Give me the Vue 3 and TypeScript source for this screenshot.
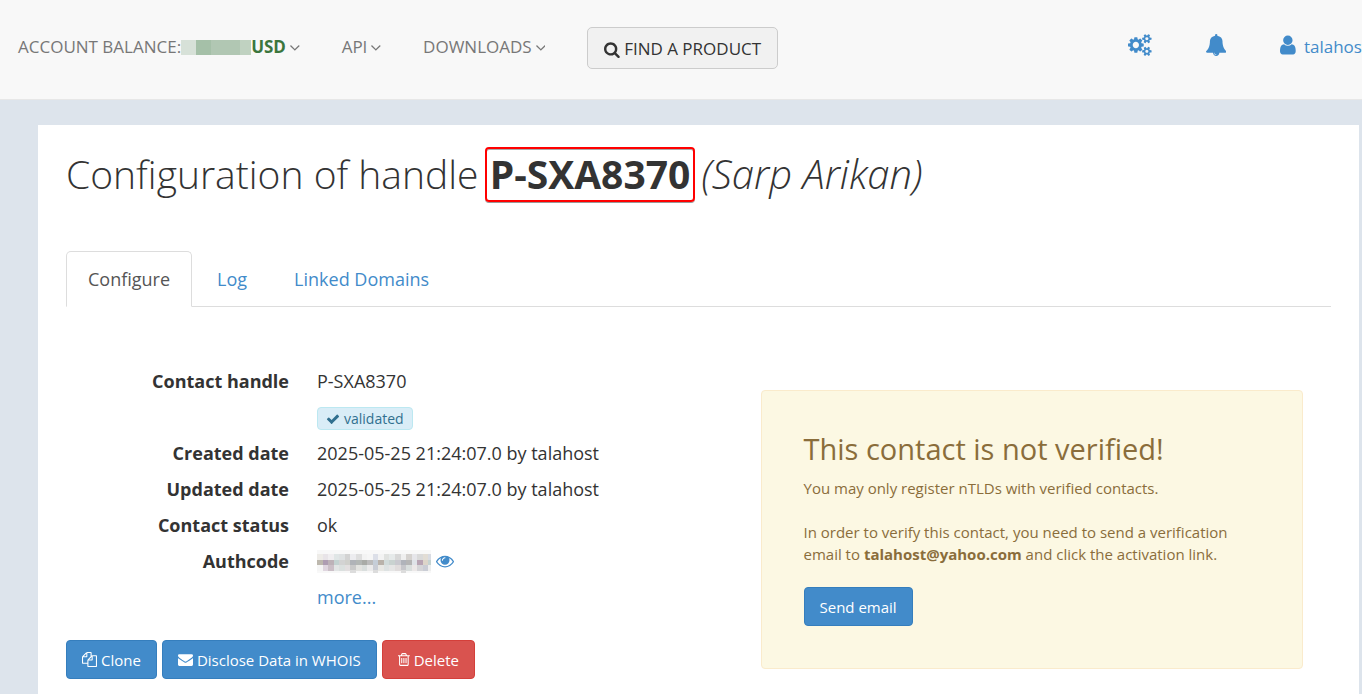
<script setup lang="ts">
import { ref } from 'vue'

interface Glyph {
  box: string
  d: string
}

interface Row {
  label: string
  value: string
}

const icons: Record<string, Glyph> = {
  search: {
    box: '64 0 1664 1792',
    d: 'M1216 832q0-185-131.5-316.5t-316.5-131.5-316.5 131.5-131.5 316.5 131.5 316.5 316.5 131.5 316.5-131.5 131.5-316.5zm512 832q0 52-38 90t-90 38q-54 0-90-38l-343-342q-179 124-399 124-143 0-273.5-55.5t-225-150-150-225-55.5-273.5 55.5-273.5 150-225 225-150 273.5-55.5 273.5 55.5 225 150 150 225 55.5 273.5q0 220-124 399l343 343q37 37 37 90z',
  },
  angle: {
    box: '384 0 1024 1792',
    d: 'M1395 736q0 13-10 23l-466 466q-10 10-23 10t-23-10l-466-466q-10-10-10-23t10-23l50-50q10-10 23-10t23 10l393 393 393-393q10-10 23-10t23 10l50 50q10 10 10 23z',
  },
  cogs: {
    box: '0 0 1920 1792',
    d: 'M896 896q0-106-75-181t-181-75-181 75-75 181 75 181 181 75 181-75 75-181zm768 512q0-52-38-90t-90-38-90 38-38 90q0 53 37.5 90.5t90.5 37.5 90.5-37.5 37.5-90.5zm0-1024q0-52-38-90t-90-38-90 38-38 90q0 53 37.5 90.5t90.5 37.5 90.5-37.5 37.5-90.5zm-384 421v185q0 10-7 19.5t-16 10.5l-155 24q-11 35-32 76 34 48 90 115 7 11 7 20 0 12-7 19-23 30-82.5 89.5t-78.5 59.5q-11 0-21-7l-115-90q-37 19-77 31-11 108-23 155-7 24-30 24h-186q-11 0-20-7.5t-10-17.5l-23-153q-34-10-75-31l-118 89q-7 7-20 7-11 0-21-8-144-133-144-160 0-9 7-19 10-14 41-53t47-61q-23-44-35-82l-152-24q-10-1-17-9.5t-7-19.5v-185q0-10 7-19.5t16-10.5l155-24q11-35 32-76-34-48-90-115-7-11-7-20 0-12 7-20 22-30 82-89t79-59q11 0 21 7l115 90q34-18 77-32 11-108 23-154 7-24 30-24h186q11 0 20 7.5t10 17.5l23 153q34 10 75 31l118-89q8-7 20-7 11 0 21 8 144 133 144 160 0 8-7 19-12 16-42 54t-45 60q23 48 34 82l152 23q10 2 17 10.5t7 19.5zm640 533v140q0 16-149 31-12 27-30 52 51 113 51 138 0 4-4 7-122 71-124 71-8 0-46-47t-52-68q-20 2-30 2t-30-2q-14 21-52 68t-46 47q-2 0-124-71-4-3-4-7 0-25 51-138-18-25-30-52-149-15-149-31v-140q0-16 149-31 13-29 30-52-51-113-51-138 0-4 4-7 4-2 35-20t59-34 30-16q8 0 46 46.5t52 67.5q20-2 30-2t30 2q51-71 92-112l6-2q4 0 124 70 4 3 4 7 0 25-51 138 17 23 30 52 149 15 149 31zm0-1024v140q0 16-149 31-12 27-30 52 51 113 51 138 0 4-4 7-122 71-124 71-8 0-46-47t-52-68q-20 2-30 2t-30-2q-14 21-52 68t-46 47q-2 0-124-71-4-3-4-7 0-25 51-138-18-25-30-52-149-15-149-31v-140q0-16 149-31 13-29 30-52-51-113-51-138 0-4 4-7 4-2 35-20t59-34 30-16q8 0 46 46.5t52 67.5q20-2 30-2t30 2q51-71 92-112l6-2q4 0 124 70 4 3 4 7 0 25-51 138 17 23 30 52 149 15 149 31z',
  },
  bell: {
    box: '64 0 1664 1792',
    d: 'M912 1696q0-16-16-16-59 0-101.5-42.5t-42.5-101.5q0-16-16-16t-16 16q0 73 51.5 124.5t124.5 51.5q16 0 16-16zm816-288q0 52-38 90t-90 38h-448q0 106-75 181t-181 75-181-75-75-181h-448q-52 0-90-38t-38-90q50-42 91-88t85-119.5 74.5-158.5 50-206 19.5-260q0-152 117-282.5t307-158.5q-8-19-8-39 0-40 28-68t68-28 68 28 28 68q0 20-8 39 190 28 307 158.5t117 282.5q0 139 19.5 260t50 206 74.5 158.5 85 119.5 91 88z',
  },
  user: {
    box: '256 0 1280 1792',
    d: 'M1536 1399q0 109-62.5 187t-150.5 78h-854q-88 0-150.5-78t-62.5-187q0-85 8.5-160.5t31.5-152 58.5-131 94-89 134.5-34.5q131 128 313 128t313-128q76 0 134.5 34.5t94 89 58.5 131 31.5 152 8.5 160.5zm-256-887q0 159-112.5 271.5t-271.5 112.5-271.5-112.5-112.5-271.5 112.5-271.5 271.5-112.5 271.5 112.5 112.5 271.5z',
  },
  check: {
    box: '0 0 1792 1792',
    d: 'M1671 566q0 40-28 68l-724 724-136 136q-28 28-68 28t-68-28l-136-136-362-362q-28-28-28-68t28-68l136-136q28-28 68-28t68 28l294 295 656-657q28-28 68-28t68 28l136 136q28 28 28 68z',
  },
  eye: {
    box: '0 0 1792 1792',
    d: 'M1664 960q-152-236-381-353 61 104 61 225 0 185-131.5 316.5t-316.5 131.5-316.5-131.5-131.5-316.5q0-121 61-225-229 117-381 353 133 205 333.5 326.5t434.5 121.5 434.5-121.5 333.5-326.5zm-720-384q0-20-14-34t-34-14q-125 0-214.5 89.5t-89.5 214.5q0 20 14 34t34 14 34-14 14-34q0-86 61-147t147-61q20 0 34-14t14-34zm848 384q0 34-20 69-140 230-376.5 368.5t-499.5 138.5-499.5-139-376.5-368q-20-35-20-69t20-69q140-229 376.5-368t499.5-139 499.5 139 376.5 368q20 35 20 69z',
  },
  files: {
    box: '0 0 1792 1792',
    d: 'M1696 384q40 0 68 28t28 68v1216q0 40-28 68t-68 28h-960q-40 0-68-28t-28-68v-288h-544q-40 0-68-28t-28-68v-672q0-40 20-88t48-76l408-408q28-28 76-48t88-20h416q40 0 68 28t28 68v328q68-40 128-40h416zm-544 213l-299 299h299v-299zm-640-384l-299 299h299v-299zm196 647l316-316v-416h-384v416q0 40-28 68t-68 28h-416v640h512v-256q0-40 20-88t48-76zm956 804v-1152h-384v416q0 40-28 68t-68 28h-416v640h896z',
  },
  envelope: {
    box: '0 0 1792 1792',
    d: 'M1792 710v794q0 66-47 113t-113 47h-1472q-66 0-113-47t-47-113v-794q44 49 101 87 362 246 497 345 57 42 92.5 65.5t94.5 48 110 24.5h2q51 0 110-24.5t94.5-48 92.5-65.5q170-123 498-345 57-39 100-87zm0-294q0 79-49 151t-122 123q-376 261-468 325-10 7-42.5 31t-54 38.5-52 32.5-57.5 27-50 9h-2q-23 0-50-9t-57.5-27-52-32.5-54-38.5-42.5-31q-91-64-262-182.5t-205-142.5q-62-42-117-115.5t-55-136.5q0-78 41.5-130t118.5-52h1472q65 0 112.5 47t47.5 113z',
  },
  trash: {
    box: '192 0 1408 1792',
    d: 'M704 736v576q0 14-9 23t-23 9h-64q-14 0-23-9t-9-23v-576q0-14 9-23t23-9h64q14 0 23 9t9 23zm256 0v576q0 14-9 23t-23 9h-64q-14 0-23-9t-9-23v-576q0-14 9-23t23-9h64q14 0 23 9t9 23zm256 0v576q0 14-9 23t-23 9h-64q-14 0-23-9t-9-23v-576q0-14 9-23t23-9h64q14 0 23 9t9 23zm128 724v-948h-896v948q0 22 7 40.5t14.5 27 10.5 8.5h832q3 0 10.5-8.5t14.5-27 7-40.5zm-672-1076h448l-48-117q-7-9-17-11h-317q-10 2-17 11zm928 32v64q0 14-9 23t-23 9h-96v948q0 83-47 143.5t-113 60.5h-832q-66 0-113-58.5t-47-141.5v-952h-96q-14 0-23-9t-9-23v-64q0-14 9-23t23-9h309l70-167q15-37 54-63t79-26h320q40 0 79 26t54 63l70 167h309q14 0 23 9t9 23z',
  },
}

const menus = ['API', 'DOWNLOADS']
const tabs = ['Configure', 'Log', 'Linked Domains']
const activeTab = ref(tabs[0])

const rows: Row[] = [
  { label: 'Created date', value: '2025-05-25 21:24:07.0 by talahost' },
  { label: 'Updated date', value: '2025-05-25 21:24:07.0 by talahost' },
  { label: 'Contact status', value: 'ok' },
]

const balanceBlocks = [
  { x: 0, w: 15, fill: '#d7e1d8' },
  { x: 15, w: 15, fill: '#a5c0a8' },
  { x: 30, w: 30, fill: '#b1c7b3' },
  { x: 60, w: 11, fill: '#c0d2c1' },
]

const maskRows: string[][] = [
  ['eeece8', 'e8e4e8', 'f0eef0', 'e0e6e6', 'dfe2e3', 'd3d3d3', 'ececef', 'dedede', 'f3f3f3', 'f6f6f6', 'dcdfe8', 'f3f3f3', 'e0e2e0', 'e6eaea', 'd8d8d8', 'efefef', 'd5d2cf', 'e6e6ea', 'dadada', 'e2ddd5', 'd9dce3'],
  ['bdb8ae', 'ae9db2', 'bdb2b8', 'c3d2d1', 'd3d3d3', 'd0d0cc', 'b0b3b8', 'b3b7b5', 'a9aba7', 'bcbcbc', 'c5ced8', 'b9b2aa', 'd1dbda', 'c9d2d0', 'c9c9cf', 'b0b3ba', 'b5b5b5', 'dfe3e8', 'b8a4b3', 'ddd5c9', 'c5d3d1'],
  ['f5f5f5', 'dfd5df', 'cbbfc7', 'e2e5e5', 'dbe0df', 'e3dfe0', 'c9c9c9', 'e3e3e0', 'd9dedd', 'ebebeb', 'c9cdd5', 'e8e8e4', 'dde2e2', 'e5e5e5', 'e0dcdc', 'c6c6ca', 'd9dedd', 'ece8e8', 'd5d5d8', 'cacdd5', 'eeeeee'],
]
</script>

<template>
  <div class="page">
    <header class="topbar">
      <nav class="menu" aria-label="Main">
        <a href="#" class="menu-link">
          <span>ACCOUNT BALANCE:</span>
          <svg class="masked-balance" viewBox="0 0 71 15" aria-hidden="true" shape-rendering="crispEdges">
            <rect v-for="b in balanceBlocks" :key="b.x" :x="b.x" y="0" :width="b.w" height="15" :fill="b.fill" />
          </svg>
          <strong class="currency">USD</strong>
          <svg class="icon angle" :viewBox="icons.angle.box" aria-hidden="true"><path :d="icons.angle.d" /></svg>
        </a>
        <a v-for="m in menus" :key="m" href="#" class="menu-link">
          <span>{{ m }}</span>
          <svg class="icon angle" :viewBox="icons.angle.box" aria-hidden="true"><path :d="icons.angle.d" /></svg>
        </a>
        <button type="button" class="find">
          <svg class="icon" :viewBox="icons.search.box" aria-hidden="true"><path :d="icons.search.d" /></svg>
          <span>FIND A PRODUCT</span>
        </button>
      </nav>
      <div class="account">
        <a href="#" aria-label="Settings"><svg class="icon large" :viewBox="icons.cogs.box" aria-hidden="true"><path :d="icons.cogs.d" /></svg></a>
        <a href="#" aria-label="Notifications"><svg class="icon large" :viewBox="icons.bell.box" aria-hidden="true"><path :d="icons.bell.d" /></svg></a>
        <a href="#" class="profile">
          <svg class="icon large" :viewBox="icons.user.box" aria-hidden="true"><path :d="icons.user.d" /></svg>
          <span class="profile-name">talahost</span>
        </a>
      </div>
    </header>

    <main class="panel">
      <h1 class="title">Configuration of handle <strong class="handle">P-SXA8370</strong> <em>(Sarp Arikan)</em></h1>

      <div class="tabs" role="tablist">
        <button
          v-for="t in tabs"
          :key="t"
          type="button"
          role="tab"
          class="tab"
          :class="{ active: t === activeTab }"
          :aria-selected="t === activeTab"
          @click="activeTab = t"
        >{{ t }}</button>
      </div>

      <div class="columns">
        <section>
          <dl class="details">
            <dt>Contact handle</dt>
            <dd>P-SXA8370</dd>
            <dd>
              <span class="badge">
                <svg class="icon" :viewBox="icons.check.box" aria-hidden="true"><path :d="icons.check.d" /></svg>
                <span>validated</span>
              </span>
            </dd>
            <template v-for="r in rows" :key="r.label">
              <dt>{{ r.label }}</dt>
              <dd>{{ r.value }}</dd>
            </template>
            <dt>Authcode</dt>
            <dd class="authcode">
              <svg class="masked-code" viewBox="0 0 114 23" aria-hidden="true" shape-rendering="crispEdges">
                <rect width="114" height="23" fill="#f8f8f8" />
                <g v-for="(line, y) in maskRows" :key="y">
                  <rect v-for="(c, x) in line" :key="x" :x="x * 5.57" :y="4 + y * 5.5" width="5.57" height="5.5" :fill="'#' + c" />
                </g>
                <rect x="33.4" y="20" width="5.6" height="3" fill="#dcdcdc" />
                <rect x="55.7" y="20" width="5.6" height="3" fill="#dcdcdc" />
                <rect x="83.5" y="20" width="5.6" height="3" fill="#dcdcdc" />
              </svg>
              <a href="#" aria-label="Show authcode"><svg class="icon" :viewBox="icons.eye.box" aria-hidden="true"><path :d="icons.eye.d" /></svg></a>
            </dd>
            <dd><a href="#">more...</a></dd>
          </dl>

          <div class="actions">
            <button type="button" class="btn">
              <svg class="icon" :viewBox="icons.files.box" aria-hidden="true"><path :d="icons.files.d" /></svg>
              <span>Clone</span>
            </button>
            <button type="button" class="btn">
              <svg class="icon" :viewBox="icons.envelope.box" aria-hidden="true"><path :d="icons.envelope.d" /></svg>
              <span>Disclose Data in WHOIS</span>
            </button>
            <button type="button" class="btn danger">
              <svg class="icon" :viewBox="icons.trash.box" aria-hidden="true"><path :d="icons.trash.d" /></svg>
              <span>Delete</span>
            </button>
          </div>
        </section>

        <aside class="notice">
          <h2>This contact is not verified!</h2>
          <p>You may only register nTLDs with verified contacts.</p>
          <p>In order to verify this contact, you need to send a verification email to <strong>talahost@yahoo.com</strong> and click the activation link.</p>
          <button type="button" class="btn">Send email</button>
        </aside>
      </div>
    </main>
  </div>
</template>

<style>
html,
body {
  margin: 0;
  height: 100%;
  background: #dde4ec;
}

body {
  overflow: hidden;
}
</style>

<style scoped>
.page {
  font-family: "Open Sans", "Noto Sans", sans-serif;
  font-size: 18px;
  line-height: 26px;
  color: #333;
}

.page *,
.page *::before {
  box-sizing: border-box;
}

a {
  color: #428bca;
  text-decoration: none;
}

button {
  font: inherit;
  cursor: pointer;
}

.icon {
  display: block;
  flex: none;
  height: 1em;
  fill: currentColor;
}

.icon.large {
  font-size: 22px;
}

.topbar {
  display: flex;
  justify-content: space-between;
  height: 100px;
  padding: 26px 0 0 18px;
  overflow: hidden;
  background: #f8f8f8;
  border-bottom: 1px solid #e7e7e7;
  font-size: 17px;
  white-space: nowrap;
}

.menu {
  display: flex;
  align-items: flex-start;
  gap: 42px;
}

.menu-link {
  display: flex;
  align-items: center;
  height: 42px;
  color: #777;
}

.masked-balance {
  width: 70px;
  height: 15px;
}

.currency {
  color: #3c763d;
}

.angle {
  margin-left: 4px;
}

.find {
  display: flex;
  align-items: center;
  gap: 4px;
  height: 42px;
  margin-top: 1px;
  padding: 2px 16px 0;
  color: #333;
  background: #f1f1f1;
  border: 1px solid #ccc;
  border-radius: 5px;
}

.account {
  display: flex;
  gap: 54px;
  height: 38px;
  align-items: center;
  margin-right: -6px;
}

.profile {
  display: flex;
  align-items: center;
  gap: 8px;
}

.profile-name {
  padding-top: 3px;
}

.panel {
  min-height: 569px;
  margin: 25px 3px 0 38px;
  padding: 22px 28px 0;
  background: #fff;
}

.title {
  margin: 0;
  font-size: 39px;
  line-height: 54px;
  font-weight: 300;
}

.title em {
  font-size: 40px;
}

.handle {
  position: relative;
  display: inline-block;
  margin: 0 1px;
  line-height: 53px;
  font-weight: 700;
}

.handle::before {
  content: "";
  position: absolute;
  inset: 0 -5px -2px;
  border: 2px solid #f00;
  border-radius: 4px;
  box-shadow: 0 1px 0 #999, inset 0 1px 0 #aaa;
}

.tabs {
  display: flex;
  gap: 3px;
  margin-top: 50px;
  border-bottom: 1px solid #ddd;
}

.tab {
  height: 56px;
  margin-bottom: -1px;
  padding: 0 21px;
  color: #428bca;
  background: none;
  border: 1px solid transparent;
  border-radius: 5px 5px 0 0;
}

.tab.active {
  color: #555;
  background: #fff;
  border-color: #ddd #ddd #fff;
}

.columns {
  display: grid;
  grid-template-columns: 1fr 1fr;
  align-items: start;
  padding-top: 56px;
}

.details {
  display: grid;
  grid-template-columns: 223px 1fr;
  column-gap: 28px;
  grid-auto-rows: 36px;
  align-items: center;
  margin: 0;
}

.details dt {
  font-weight: 700;
  text-align: right;
}

.details dd {
  grid-column: 2;
  margin: 0;
}

.badge {
  display: inline-flex;
  align-items: center;
  gap: 4px;
  height: 23px;
  padding: 0 8px;
  font-size: 14px;
  line-height: 20px;
  color: #31708f;
  background: #d9edf7;
  border: 1px solid #bce8f1;
  border-radius: 4px;
  vertical-align: middle;
}

.authcode {
  display: flex;
  align-items: center;
  gap: 5px;
}

.masked-code {
  width: 114px;
  height: 23px;
}

.actions {
  display: flex;
  gap: 5px;
  margin-top: 25px;
}

.btn {
  display: inline-flex;
  align-items: center;
  gap: 4px;
  height: 39px;
  padding: 0 15px;
  font-size: 15px;
  line-height: 22px;
  color: #fff;
  background: #428bca;
  border: 1px solid #357ebd;
  border-radius: 4px;
}

.btn.danger {
  background: #d9534f;
  border-color: #d43f3a;
}

.notice {
  margin: 27px 28px 0 62px;
  padding: 42px;
  color: #8a6d3b;
  background: #fcf8e3;
  border: 1px solid #faebcc;
  border-radius: 4px;
  font-size: 15px;
  line-height: 22px;
}

.notice h2 {
  margin: 0 0 12px;
  font-size: 29px;
  line-height: 32px;
  font-weight: 400;
}

.notice p {
  margin: 0 0 22px;
}
</style>
